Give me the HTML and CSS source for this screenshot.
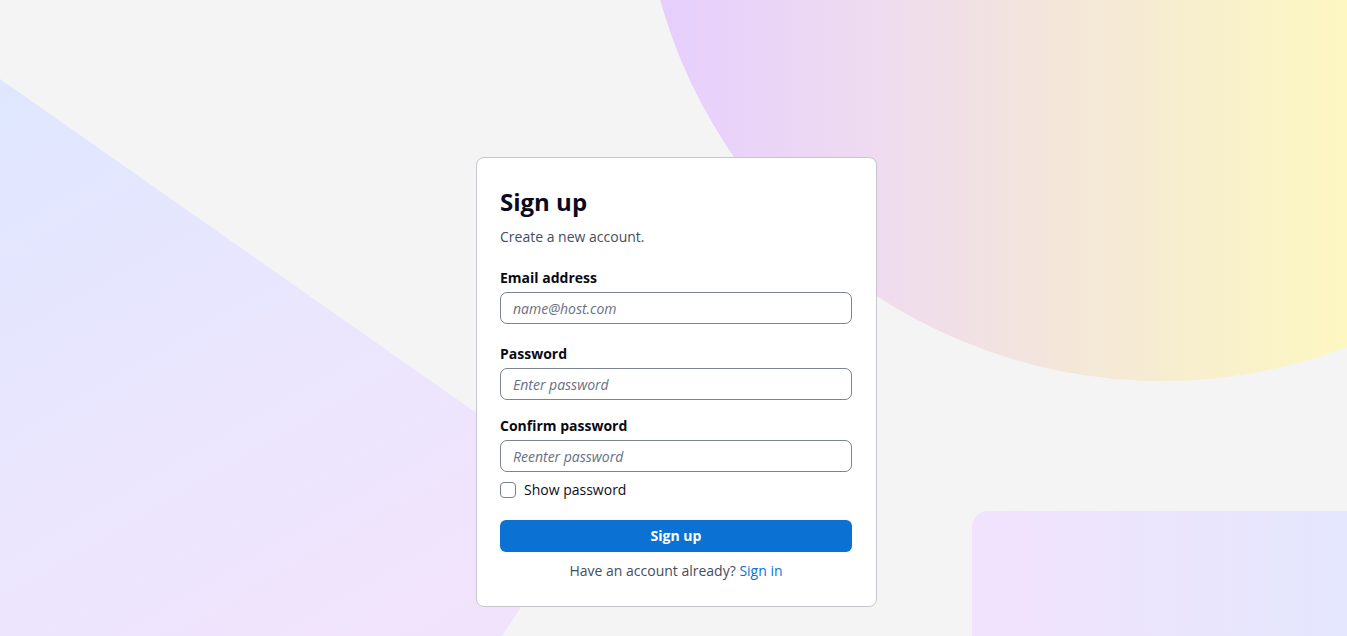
FILE: index.html
```html
<!DOCTYPE html>
<html lang="en">
<head>
<meta charset="utf-8">
<title>Sign up</title>
<link rel="stylesheet" href="styles.css">
</head>
<body>
<div class="bg">
  <div class="shape shape-circle"></div>
  <div class="shape shape-left"></div>
  <div class="shape shape-rect"></div>
</div>
<main class="page">
  <form class="card">
    <h1 class="title">Sign up</h1>
    <p class="subtitle">Create a new account.</p>
    <div class="field field-email">
      <label class="label" for="email">Email address</label>
      <input class="input" id="email" type="email" placeholder="name@host.com">
    </div>
    <div class="field field-password">
      <label class="label" for="pw">Password</label>
      <input class="input" id="pw" type="password" placeholder="Enter password">
    </div>
    <div class="field field-confirm">
      <label class="label" for="pw2">Confirm password</label>
      <input class="input" id="pw2" type="password" placeholder="Reenter password">
    </div>
    <label class="check-row">
      <input class="checkbox" type="checkbox">
      <span>Show password</span>
    </label>
    <button class="btn" type="button">Sign up</button>
    <p class="footer">Have an account already? <a class="link" href="#">Sign in</a></p>
  </form>
</main>
</body>
</html>
```

FILE: styles.css
```css
* { box-sizing: border-box; }

html, body {
  margin: 0;
  padding: 0;
  height: 100%;
}

body {
  background: #f4f4f4;
  font-family: "Open Sans", "Noto Sans", sans-serif;
  color: #0b0b1a;
  overflow: hidden;
  position: relative;
  min-height: 636px;
}

.bg {
  position: absolute;
  inset: 0;
  overflow: hidden;
  z-index: 0;
}

.shape { position: absolute; }

.shape-circle {
  left: 641px;
  top: -661px;
  width: 1042px;
  height: 1042px;
  border-radius: 50%;
  background: linear-gradient(to right, #e6cdff 0%, #eedbf0 22%, #f3e6da 40%, #f8f0cc 55%, #fdf7c1 68%, #fef8bf 100%);
}

.shape-left {
  left: 0;
  top: 0;
  width: 700px;
  height: 636px;
  clip-path: polygon(0 79px, 595px 496px, 502px 636px, 0 636px);
  background: linear-gradient(150deg, #dfe7ff 10%, #e9e6fe 45%, #f2e3fc 85%);
}

.shape-rect {
  left: 972px;
  top: 511px;
  right: 0;
  bottom: 0;
  border-top-left-radius: 16px;
  background: linear-gradient(to right, #f2e2fd, #e4e7fe);
}

.page {
  position: relative;
  z-index: 1;
  display: flex;
  justify-content: center;
  padding: 157px 0 0 6px;
}

.card {
  width: 401px;
  background: #fff;
  border: 1px solid #c6c6ce;
  border-radius: 8px;
  padding: 24px 24px 25px 23px;
  display: flex;
  flex-direction: column;
}

.title {
  margin: 4px 0 0;
  font-size: 24px;
  line-height: 32px;
  font-weight: 700;
  color: #0a0a1e;
}

.subtitle {
  margin: 9px 0 0;
  font-size: 14px;
  line-height: 20px;
  color: #454d5e;
}

.field {
  display: flex;
  flex-direction: column;
  gap: 4px;
}

.field-email { margin-top: 21px; }
.field-password { margin-top: 20px; }
.field-confirm { margin-top: 16px; }

.label {
  font-size: 14px;
  line-height: 20px;
  font-weight: 700;
  color: #0a0a14;
}

.input {
  width: 100%;
  height: 32px;
  border: 1px solid #7b8494;
  border-radius: 7px;
  padding: 0 12px;
  font-family: inherit;
  font-size: 14px;
  color: #111;
  background: #fff;
  outline: none;
}

.input::placeholder {
  font-style: italic;
  color: #687083;
}

.check-row {
  margin-top: 8px;
  display: flex;
  align-items: center;
  gap: 8px;
  font-size: 14px;
  line-height: 20px;
  color: #0e0e18;
}

.checkbox {
  appearance: none;
  -webkit-appearance: none;
  margin: 0;
  width: 16px;
  height: 16px;
  border: 1px solid #7a8292;
  border-radius: 4px;
  background: #fff;
}

.btn {
  margin-top: 20px;
  height: 32px;
  border: none;
  border-radius: 6px;
  background: #0b72d4;
  color: #fff;
  font-family: inherit;
  font-size: 14px;
  font-weight: 700;
  line-height: 20px;
}

.footer {
  margin: 9px 0 0;
  text-align: center;
  font-size: 14px;
  line-height: 20px;
  color: #454d5e;
}

.link {
  color: #0b72d4;
  text-decoration: none;
}
```
